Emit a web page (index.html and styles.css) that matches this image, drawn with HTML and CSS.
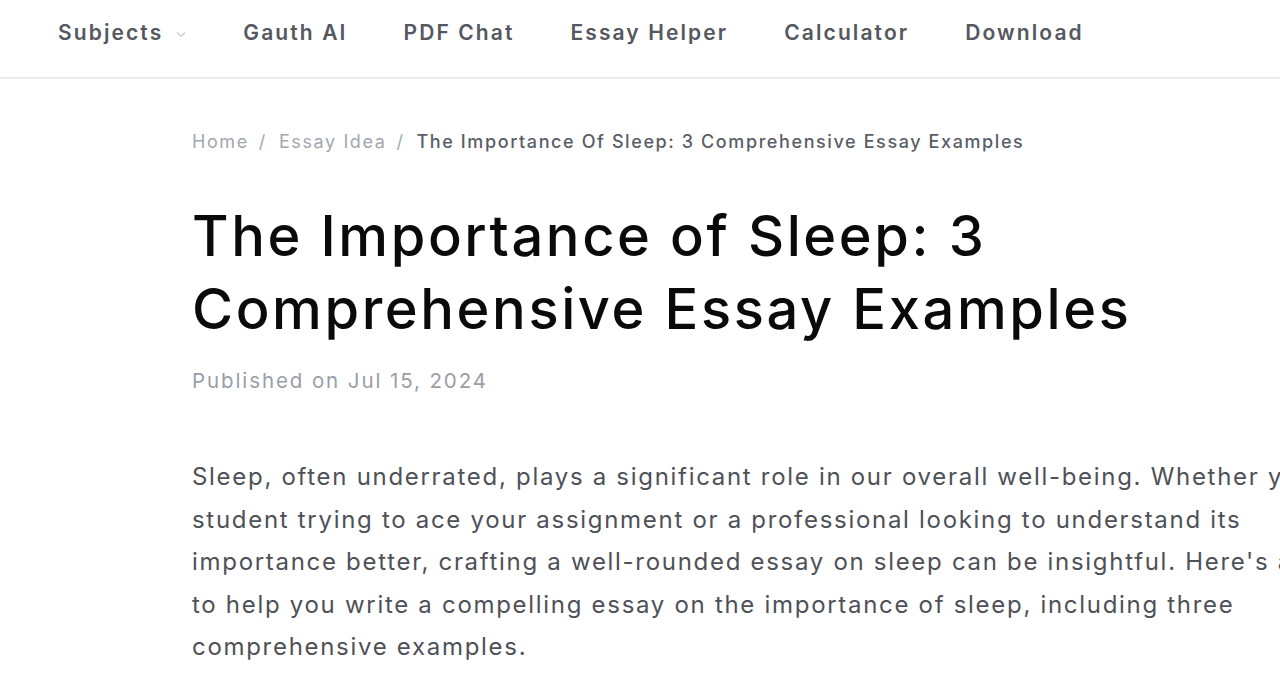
FILE: index.html
```html
<!DOCTYPE html>
<html lang="en">
<head>
<meta charset="utf-8">
<title>The Importance of Sleep: 3 Comprehensive Essay Examples</title>
<link rel="stylesheet" href="styles.css">
</head>
<body>
<header class="nav">
  <nav class="nav-links">
    <a class="nav-item" href="#">Subjects<svg class="chev" width="12" height="12" viewBox="0 0 12 12"><path d="M2 4.5 L6 8.2 L10 4.5" fill="none" stroke="#c4c7cd" stroke-width="1.2"/></svg></a>
    <a class="nav-item" href="#">Gauth AI</a>
    <a class="nav-item" href="#">PDF Chat</a>
    <a class="nav-item" href="#">Essay Helper</a>
    <a class="nav-item" href="#">Calculator</a>
    <a class="nav-item" href="#">Download</a>
  </nav>
</header>
<main class="content">
  <div class="crumbs">
    <a class="crumb" href="#">Home</a><span class="sep">/</span>
    <a class="crumb" href="#">Essay Idea</a><span class="sep">/</span>
    <span class="crumb current">The Importance Of Sleep: 3 Comprehensive Essay Examples</span>
  </div>
  <h1 class="title">The Importance of Sleep: 3 Comprehensive Essay Examples</h1>
  <div class="published">Published on Jul 15, 2024</div>
  <p class="intro">Sleep, often underrated, plays a significant role in our overall well-being. Whether you're a student trying to ace your assignment or a professional looking to understand its importance better, crafting a well-rounded essay on sleep can be insightful. Here's a guide to help you write a compelling essay on the importance of sleep, including three comprehensive examples.</p>
</main>
</body>
</html>
```
FILE: styles.css
```css
html, body {
  margin: 0;
  padding: 0;
  overflow: hidden;
  background: #ffffff;
  font-family: Inter, "Noto Sans", sans-serif;
}
.nav {
  height: 77px;
  border-bottom: 2px solid #ececf0;
}
.nav-links {
  display: flex;
  align-items: center;
  gap: 56px;
  padding: 20px 0 0 58px;
}
.nav-item {
  display: flex;
  align-items: center;
  font-size: 21px;
  font-weight: 600;
  color: #55585f;
  text-decoration: none;
  letter-spacing: 2.1px;
}
.chev { margin: 2px 0 0 12px; }
.content {
  padding: 47px 0 0 192px;
  width: 1195px;
}
.crumbs {
  display: flex;
  align-items: center;
  font-size: 18px;
  letter-spacing: 1.6px;
  color: #a3a7b0;
  height: 30px;
  white-space: nowrap;
}
.crumb { color: #a3a7b0; text-decoration: none; }
.crumb.current { color: #5a5e67; font-weight: 500; }
.sep { margin: 0 12px 0 10px; color: #a3a7b0; }
.title {
  margin: 44px 0 0 0;
  font-size: 56px;
  line-height: 72.5px;
  font-weight: 500;
  color: #0a0a0b;
  width: 1000px;
  letter-spacing: 2.6px;
}
.published {
  margin-top: 23px;
  font-size: 20.5px;
  letter-spacing: 1.9px;
  color: #9a9ea7;
}
.intro {
  margin: 63px 0 0 0;
  font-size: 24px;
  line-height: 42.5px;
  letter-spacing: 1.7px;
  color: #4e5158;
}
```
